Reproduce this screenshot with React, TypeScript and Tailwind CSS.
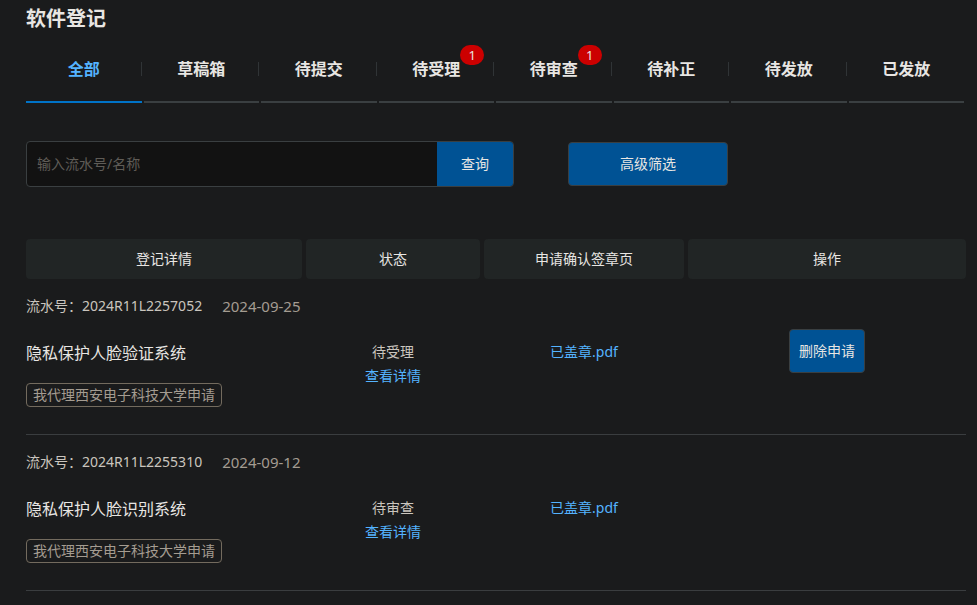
import React from "react";

type Tab = { label: string; count?: number };

type RegistrationRecord = {
  serial: string;
  date: string;
  name: string;
  agency: string;
  status: string;
  file: string;
  deletable: boolean;
};

const tabs: Tab[] = [
  { label: "全部" },
  { label: "草稿箱" },
  { label: "待提交" },
  { label: "待受理", count: 1 },
  { label: "待审查", count: 1 },
  { label: "待补正" },
  { label: "待发放" },
  { label: "已发放" },
];

const records: RegistrationRecord[] = [
  {
    serial: "2024R11L2257052",
    date: "2024-09-25",
    name: "隐私保护人脸验证系统",
    agency: "我代理西安电子科技大学申请",
    status: "待受理",
    file: "已盖章.pdf",
    deletable: true,
  },
  {
    serial: "2024R11L2255310",
    date: "2024-09-12",
    name: "隐私保护人脸识别系统",
    agency: "我代理西安电子科技大学申请",
    status: "待审查",
    file: "已盖章.pdf",
    deletable: false,
  },
];

function TabBar() {
  const [active, setActive] = React.useState(0);
  return (
    <nav className="mt-3 grid grid-cols-8">
      {tabs.map((tab, i) => (
        <button
          key={tab.label}
          type="button"
          onClick={() => setActive(i)}
          className={
            "mr-0.5 flex h-[60px] items-start border-b-2 pt-3.5 text-base leading-6 font-bold " +
            (i === active
              ? "border-[#0073c7] text-[#54b3ff]"
              : "border-[#3a3f41] text-[#e8e6e3]")
          }
        >
          <span
            className={
              "flex flex-1 justify-center " +
              (i < tabs.length - 1
                ? "bg-[linear-gradient(#303436,#303436)] bg-[length:1px_14px] bg-right bg-no-repeat"
                : "")
            }
          >
            <span className="relative">
              {tab.label}
              {tab.count !== undefined && (
                <span className="absolute -top-3 left-full h-5 w-6 rounded-full bg-[#cc0000] text-center text-[13px] leading-5 font-normal">
                  {tab.count}
                </span>
              )}
            </span>
          </span>
        </button>
      ))}
    </nav>
  );
}

function SearchBar() {
  return (
    <div className="mt-[38px] flex items-center gap-[54px]">
      <form
        className="flex h-[46px] w-[488px] overflow-hidden rounded border border-[#3a3f41] bg-[#121212]"
        onSubmit={(e) => e.preventDefault()}
      >
        <input
          type="text"
          aria-label="输入流水号/名称"
          placeholder="输入流水号/名称"
          className="min-w-0 flex-1 bg-transparent px-2.5 text-[#e8e6e3] outline-none placeholder:text-[#5f5c57]"
        />
        <button type="submit" className="w-[76px] bg-[#005294]">
          查询
        </button>
      </form>
      <button
        type="button"
        className="h-11 w-40 rounded border border-[#3a3f41] bg-[#005294]"
      >
        高级筛选
      </button>
    </div>
  );
}

function RecordRows({ record }: { record: RegistrationRecord }) {
  return (
    <>
      <tr>
        <td colSpan={4} className="h-[50px] pt-[15px] align-top">
          <div className="flex gap-5">
            <span className="text-[#cac5be]">流水号：{record.serial}</span>
            <span className="text-[15px] text-[#a49c91]">{record.date}</span>
          </div>
        </td>
      </tr>
      <tr className="border-b border-[#3a3d3f] align-top">
        <td className="pt-3 pb-[27px]">
          <div className="text-base leading-6">{record.name}</div>
          <div className="mt-[18px] inline-flex rounded border border-[#736b5e] px-[6px] align-top leading-[22px] text-[#a49c91]">
            {record.agency}
          </div>
        </td>
        <td className="pt-[11px] text-center">
          <div className="text-[#cac5be]">{record.status}</div>
          <a href="#detail" className="text-[#54b3ff]">
            查看详情
          </a>
        </td>
        <td className="pt-[11px] text-center">
          <a href="#file" className="text-[#54b3ff]">
            {record.file}
          </a>
        </td>
        <td className="pl-0.5 text-center">
          {record.deletable && (
            <button
              type="button"
              className="h-11 w-[76px] rounded border border-[#3a3f41] bg-[#005294] align-top"
            >
              删除申请
            </button>
          )}
        </td>
      </tr>
    </>
  );
}

export default function App() {
  return (
    <main className="min-h-screen bg-[#1a1b1c] pt-[7px] pr-[11px] pl-[26px] font-['Noto_Sans','Noto_Sans_CJK_SC',sans-serif] text-sm leading-6 text-[#e8e6e3]">
      <h1 className="text-xl leading-6 font-bold">软件登记</h1>
      <TabBar />
      <SearchBar />
      <table className="mt-[52px] w-full table-fixed border-collapse">
        <thead>
          <tr className="leading-10">
            <th className="w-[278px] p-0 pr-0.5 font-normal">
              <div className="rounded-sm bg-[#212525]">登记详情</div>
            </th>
            <th className="w-[178px] p-0 px-0.5 font-normal">
              <div className="rounded-sm bg-[#212525]">状态</div>
            </th>
            <th className="w-[204px] p-0 px-0.5 font-normal">
              <div className="rounded-sm bg-[#212525]">申请确认签章页</div>
            </th>
            <th className="p-0 pl-0.5 font-normal">
              <div className="rounded-sm bg-[#212525]">操作</div>
            </th>
          </tr>
        </thead>
        <tbody>
          {records.map((record) => (
            <RecordRows key={record.serial} record={record} />
          ))}
        </tbody>
      </table>
    </main>
  );
}
